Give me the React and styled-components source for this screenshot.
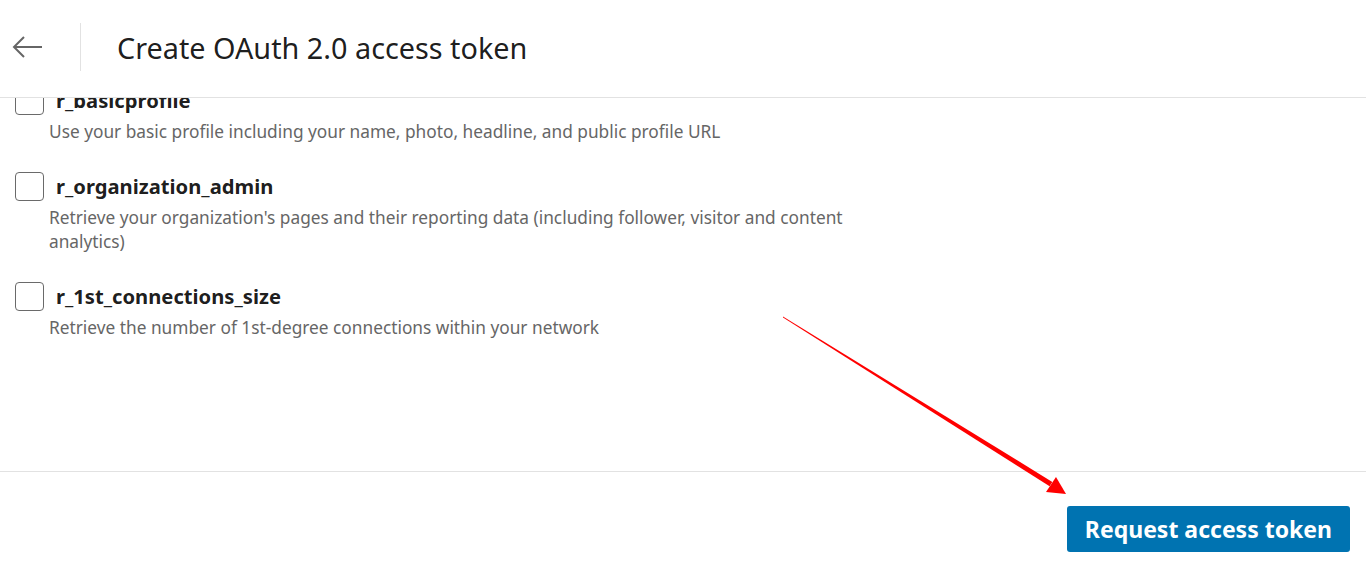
import React, { useLayoutEffect, useRef } from "react";
import styled, { createGlobalStyle } from "styled-components";

const Global = createGlobalStyle`
  html, body { margin: 0; padding: 0; background: #ffffff; }
  body { font-family: "Noto Sans", "Open Sans", Arial, sans-serif; }
  * { box-sizing: border-box; }
`;

const Frame = styled.div`
  position: relative;
  height: 584px;
  display: flex;
  flex-direction: column;
  background: #fff;
  overflow: hidden;
`;

const Header = styled.header`
  height: 98px;
  flex: none;
  display: flex;
  align-items: center;
  border-bottom: 1px solid #e2e2e2;
  padding: 0 0 3px 10px;
`;

const BackButton = styled.button`
  width: 36px;
  height: 36px;
  padding: 0;
  border: none;
  background: transparent;
  display: flex;
  align-items: center;
  justify-content: center;
  color: #666;
  cursor: pointer;
`;

const Divider = styled.div`
  width: 1px;
  height: 48px;
  background: #e2e2e2;
  margin-left: 34px;
`;

const Title = styled.h1`
  margin: 0 0 0 36px;
  font-size: 28.8px;
  font-weight: 400;
  color: rgba(0, 0, 0, 0.9);
  letter-spacing: 0;
`;

const Scroller = styled.div`
  position: relative;
  flex: 1;
  overflow: hidden;
  padding: 20px 15px 0;
`;

const Row = styled.div`
  display: flex;
  flex-direction: column;
  margin-bottom: 28px;
`;

const RowHead = styled.label`
  display: flex;
  align-items: center;
  gap: 12px;
  height: 28px;
  cursor: pointer;
`;

const Box = styled.span`
  width: 29px;
  height: 29px;
  flex: none;
  border: 1.5px solid #6a6a6a;
  border-radius: 4px;
  background: #fff;
`;

const ScopeName = styled.span`
  font-size: 20.2px;
  font-weight: 700;
  color: rgba(0, 0, 0, 0.9);
`;

const ScopeDesc = styled.p`
  margin: 6px 0 0 34px;
  max-width: 820px;
  font-size: 17.3px;
  line-height: 24px;
  color: #666;
`;

const Footer = styled.footer`
  flex: none;
  height: 113px;
  border-top: 1px solid #e2e2e2;
  display: flex;
  justify-content: flex-end;
  align-items: flex-start;
  padding: 34px 16px 0 0;
`;

const PrimaryButton = styled.button`
  height: 46px;
  padding: 0 18px;
  border: none;
  border-radius: 3px;
  background: #0073b1;
  color: #fff;
  font-family: "Noto Sans", "Open Sans", Arial, sans-serif;
  font-size: 23px;
  font-weight: 700;
  cursor: pointer;
`;

const Annotation = styled.svg`
  position: absolute;
  left: 0;
  top: 0;
  width: 1366px;
  height: 584px;
  pointer-events: none;
`;

const scopes = [
  { name: "r_liteprofile", desc: "Use your name and photo" },
  { name: "r_emailaddress", desc: "Use the primary email address associated with your LinkedIn account" },
  { name: "w_member_social", desc: "Create, modify, and delete posts, comments, and reactions on your behalf" },
  { name: "r_basicprofile", desc: "Use your basic profile including your name, photo, headline, and public profile URL", anchor: true },
  {
    name: "r_organization_admin",
    desc: "Retrieve your organization's pages and their reporting data (including follower, visitor and content analytics)",
  },
  { name: "r_1st_connections_size", desc: "Retrieve the number of 1st-degree connections within your network" },
];

function BackArrow() {
  return (
    <svg width="32" height="24" viewBox="0 0 32 24" fill="none">
      <path d="M2 12 H30" stroke="currentColor" strokeWidth="2" />
      <path d="M12 2 L2 12 L12 22" stroke="currentColor" strokeWidth="2" fill="none" />
    </svg>
  );
}

export default function App() {
  const scrollRef = useRef(null);
  const anchorRef = useRef(null);

  useLayoutEffect(() => {
    if (scrollRef.current && anchorRef.current) {
      scrollRef.current.scrollTop = anchorRef.current.offsetTop + 12;
    }
  }, []);

  return (
    <Frame>
      <Global />
      <Header>
        <BackButton aria-label="Back">
          <BackArrow />
        </BackButton>
        <Divider />
        <Title>Create OAuth 2.0 access token</Title>
      </Header>
      <Scroller ref={scrollRef}>
        {scopes.map((s) => (
          <Row key={s.name} ref={s.anchor ? anchorRef : undefined}>
            <RowHead>
              <Box />
              <ScopeName>{s.name}</ScopeName>
            </RowHead>
            <ScopeDesc>{s.desc}</ScopeDesc>
          </Row>
        ))}
        <div style={{ height: 200 }} />
      </Scroller>
      <Footer>
        <PrimaryButton>Request access token</PrimaryButton>
      </Footer>
      <Annotation viewBox="0 0 1366 584">
        <polygon points="783,316.6 1052.3,481.9 1049.6,486.3 783,317.4" fill="#ff0000" />
        <polygon points="1066,494 1046,492 1056,477" fill="#ff0000" />
      </Annotation>
    </Frame>
  );
}
